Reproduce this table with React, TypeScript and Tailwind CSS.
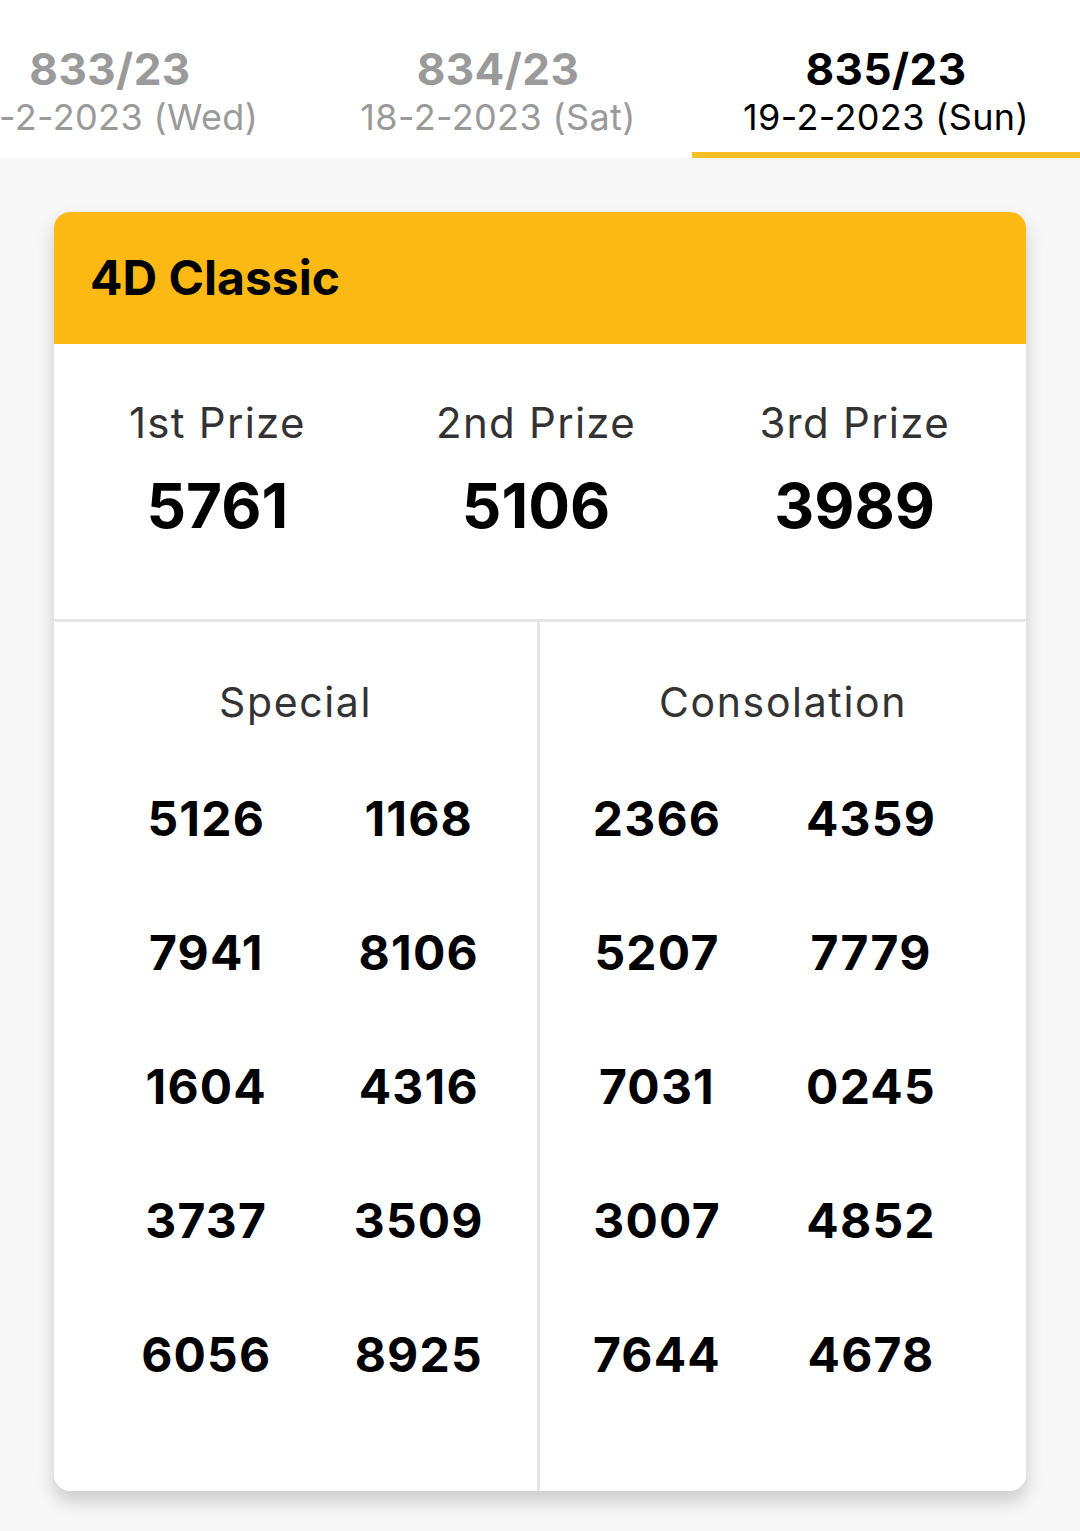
const tabs = [
  { draw: "833/23", date: "15-2-2023 (Wed)", active: false },
  { draw: "834/23", date: "18-2-2023 (Sat)", active: false },
  { draw: "835/23", date: "19-2-2023 (Sun)", active: true },
];

const prizes = [
  { label: "1st Prize", value: "5761" },
  { label: "2nd Prize", value: "5106" },
  { label: "3rd Prize", value: "3989" },
];

const special = ["5126", "1168", "7941", "8106", "1604", "4316", "3737", "3509", "6056", "8925"];
const consolation = ["2366", "4359", "5207", "7779", "7031", "0245", "3007", "4852", "7644", "4678"];

const NumberGrid = ({ nums }: { nums: string[] }) => (
  <div className="grid grid-cols-2 gap-y-[86px]">
    {nums.map((n, i) => (
      <div key={i} className="text-center text-[48px] leading-[48px] font-bold text-black tracking-wide">
        {n}
      </div>
    ))}
  </div>
);

const App = () => {
  return (
    <div className="min-h-[1531px] w-[1080px] overflow-hidden bg-[#f7f7f7] font-['Inter','Noto_Sans',sans-serif]">
      <div className="h-[158px] bg-white overflow-hidden">
        <div className="flex ml-[-84px]">
          {tabs.map((t) => (
            <div key={t.draw} className="w-[388px] shrink-0 h-[158px] flex flex-col items-center relative">
              <div
                className={`mt-[41px] text-[44px] leading-[56px] font-bold tracking-[0.01em] ${t.active ? "text-black" : "text-[#9a9a9a]"}`}
              >
                {t.draw}
              </div>
              <div className={`text-[36px] leading-[40px] tracking-[0.01em] whitespace-nowrap ${t.active ? "text-black" : "text-[#9a9a9a]"}`}>
                {t.date}
              </div>
              {t.active && <div className="absolute left-0 right-0 bottom-0 h-[6px] bg-[#f7bf25]" />}
            </div>
          ))}
        </div>
      </div>

      <div className="mx-[54px] mt-[54px] rounded-[16px] bg-white overflow-hidden shadow-[0_10px_18px_rgba(0,0,0,0.18)]">
        <div className="h-[132px] bg-[#fdb913] flex items-center px-[36px]">
          <div className="text-[48px] font-bold text-black leading-none">4D Classic</div>
        </div>

        <div className="h-[278px] grid grid-cols-3 pl-[4px] pr-[12px] border-b-[3px] border-[#e6e6e6]">
          {prizes.map((p) => (
            <div key={p.label} className="flex flex-col items-center pt-[55px]">
              <div className="text-[42px] leading-[48px] text-[#333] tracking-[0.03em]">{p.label}</div>
              <div className="mt-[28px] text-[62px] leading-[62px] font-bold text-black">{p.value}</div>
            </div>
          ))}
        </div>

        <div className="grid grid-cols-2 h-[869px]">
          <div className="border-r-[3px] border-[#e6e6e6] pt-[57px]">
            <div className="text-center text-[41px] leading-[46px] text-[#333] tracking-[0.04em]">Special</div>
            <div className="mt-[70px] pl-[46px] pr-[12px]">
              <NumberGrid nums={special} />
            </div>
          </div>
          <div className="pt-[57px]">
            <div className="text-center text-[41px] leading-[46px] text-[#333] tracking-[0.04em]">Consolation</div>
            <div className="mt-[70px] pl-[10px] pr-[48px]">
              <NumberGrid nums={consolation} />
            </div>
          </div>
        </div>
      </div>
    </div>
  );
};

export default App;
